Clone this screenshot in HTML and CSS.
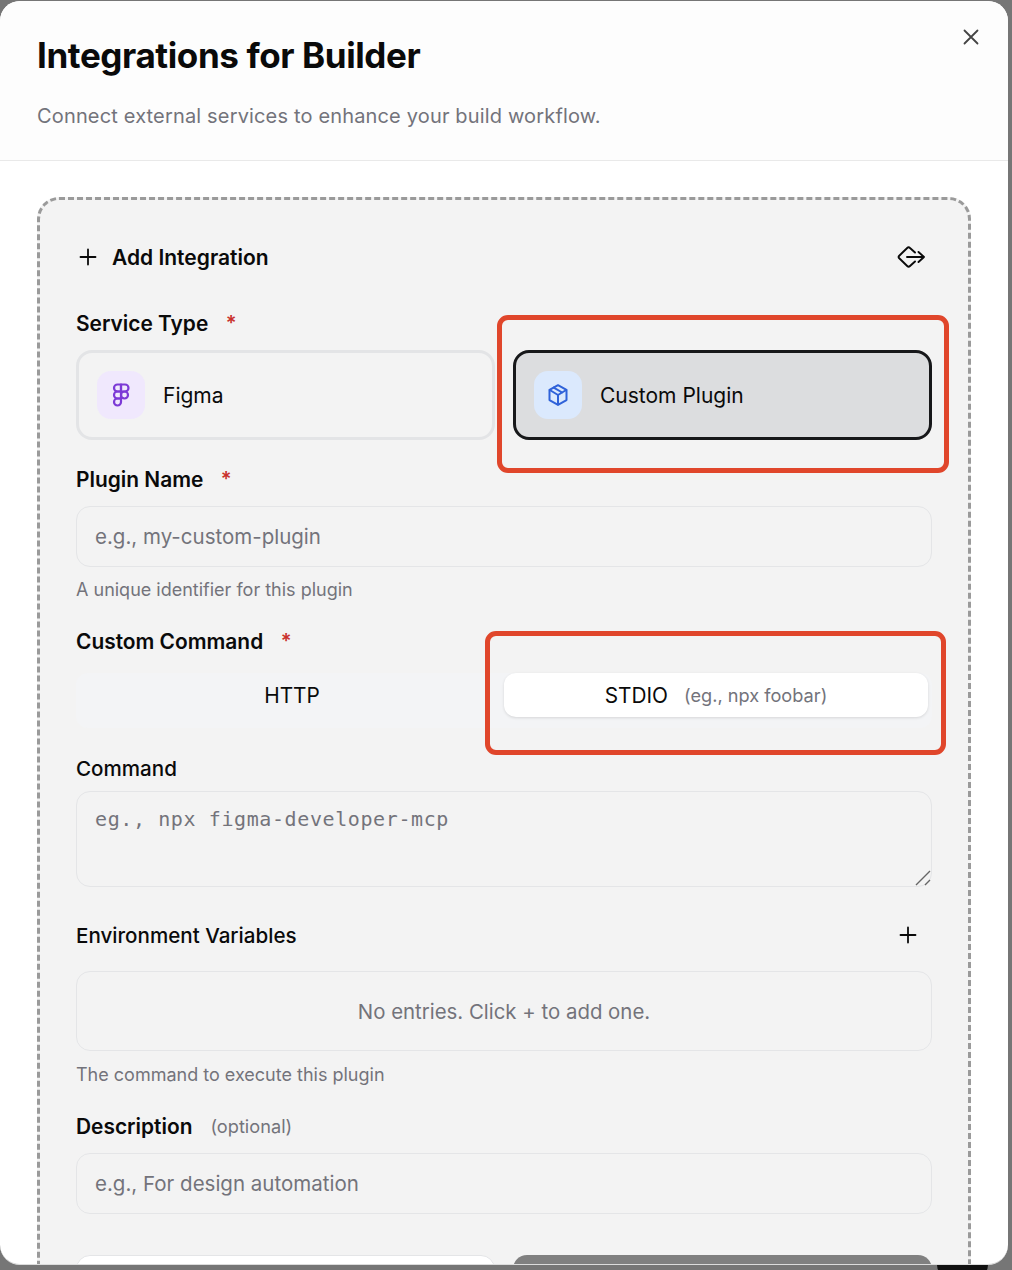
FILE: index.html
```html
<!DOCTYPE html>
<html lang="en">
  <head>
    <meta charset="UTF-8" />
    <meta name="viewport" content="width=device-width, initial-scale=1.0" />
    <title>Integrations for Builder</title>
    <link rel="stylesheet" href="styles.css">
  </head>
  <body>
    <div class="modal">
      <!-- HEADER -->
      <div class="modal-header">
        <h1>Integrations for Builder</h1>
        <p>Connect external services to enhance your build workflow.</p>
        <button class="close-btn" aria-label="Close">
          <svg width="18" height="18" viewBox="0 0 18 18" fill="none" stroke="#444" stroke-width="1.8" stroke-linecap="round"><path d="M2.5 2.5l13 13M15.5 2.5l-13 13"/></svg>
        </button>
      </div>

      <div class="modal-body">
        <div class="panel">
          <div class="panel-title">
            <div class="panel-title-left">
              <svg width="18" height="18" viewBox="0 0 18 18" fill="none" stroke="#0a0a0a" stroke-width="1.8" stroke-linecap="round"><path d="M9 1.5v15M1.5 9h15"/></svg>
              <span>Add Integration</span>
            </div>
            <svg width="28" height="22" viewBox="0 0 28 22" fill="none" stroke="#0a0a0a" stroke-width="1.9" stroke-linecap="round" stroke-linejoin="round"><path d="M18 6.500L13 2a2 2 0 0 0-2.800 0L2 10a1.400 1.400 0 0 0 0 2l8.200 8a2 2 0 0 0 2.800 0l5-4.500"/><path d="M10 11H27M21.500 6L27 11l-5.500 5"/></svg>
          </div>

          <div class="label-row"><label>Service Type</label><span class="required">*</span></div>
          <div class="service-grid">
            <div class="service-card">
              <div class="service-icon icon-figma">
                <svg width="24" height="24" viewBox="0 0 24 24" fill="none" stroke="#7c3ad6" stroke-width="2.200" stroke-linecap="round" stroke-linejoin="round"><path d="M12 1.500H8.500a3.500 3.500 0 0 0 0 7H12z"/><path d="M12 8.500H8.500a3.500 3.500 0 0 0 0 7H12z"/><path d="M12 15.500H8.500a3.500 3.500 0 1 0 3.500 3.500z"/><path d="M12 1.500h4a3.500 3.500 0 1 1 0 7h-4z"/><path d="M12 12a3.500 3.500 0 1 1 7 0a3.500 3.500 0 1 1-7 0z"/></svg>
              </div>
              <span>Figma</span>
            </div>
            <div class="service-card selected">
              <div class="service-icon icon-plugin">
                <svg width="24" height="24" viewBox="0 0 24 24" fill="none" stroke="#2f62d9" stroke-width="2" stroke-linecap="round" stroke-linejoin="round"><path d="M12 2.200l8.500 4.700v10.200L12 21.800l-8.500-4.700V6.900z"/><path d="M3.800 7L12 12l8.200-5M12 12v9.600M7.700 4.600l8.500 4.900"/></svg>
              </div>
              <span>Custom Plugin</span>
              <div class="highlight highlight-card"></div>
            </div>
          </div>

          <div class="label-row name-label"><label>Plugin Name</label><span class="required">*</span></div>
          <input class="text-input" type="text" placeholder="e.g., my-custom-plugin" />
          <div class="hint hint-name">A unique identifier for this plugin</div>

          <div class="label-row command-label"><label>Custom Command</label><span class="required">*</span></div>
          <div class="segments">
            <div class="segment">HTTP</div>
            <div class="segment active">
              <span>STDIO</span><span class="segment-note">(eg., npx foobar)</span>
              <div class="highlight highlight-segment"></div>
            </div>
          </div>

          <div class="label-row plain-label"><label class="normal">Command</label></div>
          <div class="command-wrap">
            <textarea class="command-input" placeholder="eg., npx figma-developer-mcp"></textarea>
            <svg class="resize-grip" width="16" height="16" viewBox="0 0 16 16" fill="none" stroke="#666" stroke-width="1.400"><path d="M1 15L15 1M10 15l5-5"/></svg>
          </div>

          <div class="env-row">
            <label class="normal">Environment Variables</label>
            <svg width="18" height="18" viewBox="0 0 18 18" fill="none" stroke="#0a0a0a" stroke-width="1.8" stroke-linecap="round"><path d="M9 1.500v15M1.500 9h15"/></svg>
          </div>
          <div class="env-box">No entries. Click + to add one.</div>
          <div class="hint">The command to execute this plugin</div>

          <div class="label-row desc-label"><label>Description</label><span class="optional">(optional)</span></div>
          <input class="text-input" type="text" placeholder="e.g., For design automation" />

          <div class="actions">
            <button class="btn-cancel"></button>
            <button class="btn-save"></button>
          </div>
        </div>
      </div>
    </div>
    <div class="dock-bump"></div>
  </body>
</html>
```

FILE: styles.css
```css
* {
  box-sizing: border-box;
  margin: 0;
  padding: 0;
}

html,
body {
  height: 100%;
  overflow: hidden;
  background-color: #767676;
  font-family: Inter, "Liberation Sans", sans-serif;
  color: #0a0a0a;
}

.modal {
  position: relative;
  width: 1008px;
  height: 1264px;
  margin-top: 1px;
  background-color: #fff;
  border-bottom: 1px solid #dcdcdc;
  border-radius: 20px;
  overflow: hidden;
}

.modal-header {
  position: relative;
  height: 160px;
  padding: 32px 37px 0;
  background-color: #fdfdfd;
  border-bottom: 1px solid #e9e9e9;
}

.modal-header h1 {
  font-size: 35px;
  line-height: 44px;
  font-weight: 700;
  letter-spacing: -0.4px;
}

.modal-header p {
  margin-top: 25px;
  font-size: 20px;
  line-height: 28px;
  letter-spacing: 0.16px;
  color: #73737b;
}

.close-btn {
  position: absolute;
  top: 27px;
  right: 28px;
  width: 18px;
  height: 18px;
  border: none;
  background: none;
}

.modal-body {
  padding: 36px 37px 0;
}

.panel {
  min-height: 1200px;
  padding: 39px 36px 0;
  background-color: #f3f3f3;
  border: 3px dashed #9a9a9a;
  border-radius: 22px;
}

.panel-title {
  display: flex;
  justify-content: space-between;
  align-items: center;
  height: 36px;
  padding: 0 7px 0 3px;
}

.panel-title-left {
  display: flex;
  align-items: center;
  gap: 15px;
  font-size: 21px;
  font-weight: 600;
}

.label-row {
  display: flex;
  align-items: center;
  height: 28px;
  margin-top: 34px;
}

.label-row label {
  font-size: 20.9px;
  font-weight: 600;
}

.label-row label.normal,
.env-row label.normal {
  font-size: 20.6px;
  font-weight: 500;
}

.required {
  margin-left: 17.5px;
  font-size: 20px;
  font-weight: 600;
  color: #c9302c;
}

.optional {
  margin-left: 18px;
  font-size: 18.2px;
  color: #73737b;
}

.service-grid {
  display: grid;
  grid-template-columns: 1fr 1fr;
  gap: 18px;
  margin-top: 13px;
}

.service-card {
  position: relative;
  display: flex;
  align-items: center;
  gap: 18px;
  height: 90px;
  padding: 0 18px;
  border: 3px solid #e3e4e6;
  border-radius: 16px;
  font-size: 21px;
}

.service-card.selected {
  background-color: #dcdddf;
  border-color: #17181a;
}

.service-icon {
  display: flex;
  justify-content: center;
  align-items: center;
  width: 48px;
  height: 48px;
  border-radius: 14px;
}

.icon-figma {
  background-color: #f0e8fd;
}

.icon-plugin {
  background-color: #dbe9fd;
}

.highlight {
  position: absolute;
  border: 5px solid #e0462b;
  border-radius: 11px;
  pointer-events: none;
}

.highlight-card {
  top: -38px;
  right: -20px;
  bottom: -36px;
  left: -19px;
}

.highlight-segment {
  top: -42px;
  right: -18px;
  bottom: -38px;
  left: -19px;
}

.name-label {
  margin-top: 25px;
}

.text-input {
  display: block;
  width: 100%;
  height: 61px;
  margin-top: 13px;
  padding: 0 18px;
  background: none;
  border: 1px solid #e4e5e7;
  border-radius: 14px;
  font-family: inherit;
  font-size: 20.5px;
  outline: none;
}

.text-input::placeholder,
.command-input::placeholder {
  color: #73737b;
  opacity: 1;
}

.hint {
  margin-top: 12px;
  font-size: 18px;
  line-height: 24px;
  color: #73737b;
}

.hint-name {
  margin-top: 11px;
}

.command-label {
  margin-top: 25px;
}

.segments {
  display: grid;
  grid-template-columns: 1fr 1fr;
  height: 55px;
  margin-top: 18px;
  padding: 0 4px 11px;
  background-color: #f3f4f6;
  border-radius: 12px;
}

.segment {
  position: relative;
  display: flex;
  justify-content: center;
  align-items: center;
  gap: 16px;
  font-size: 20.8px;
}

.segment.active {
  background-color: #fff;
  border-radius: 12px;
  box-shadow: 0 1px 3px rgba(0, 0, 0, 0.12);
}

.segment-note {
  font-size: 18.2px;
  color: #73737b;
}

.plain-label {
  margin-top: 26px;
}

.command-wrap {
  position: relative;
  margin-top: 9px;
}

.command-input {
  display: block;
  width: 100%;
  height: 96px;
  padding: 13px 18px;
  background: none;
  border: 1px solid #e4e5e7;
  border-radius: 14px;
  font-family: "DejaVu Sans Mono", monospace;
  font-size: 20px;
  letter-spacing: 0.6px;
  line-height: 28px;
  outline: none;
  resize: none;
}

.resize-grip {
  position: absolute;
  right: 1px;
  bottom: 1px;
}

.env-row {
  display: flex;
  justify-content: space-between;
  align-items: center;
  height: 28px;
  margin-top: 34px;
  padding-right: 15px;
}

.env-box {
  display: flex;
  justify-content: center;
  align-items: center;
  height: 80px;
  margin-top: 22px;
  border: 1px solid #e4e5e7;
  border-radius: 14px;
  font-size: 20.4px;
  color: #73737b;
}

.desc-label {
  margin-top: 25px;
}

.actions {
  display: grid;
  grid-template-columns: 1fr 1fr;
  gap: 18px;
  margin-top: 41px;
}

.actions button {
  height: 56px;
  border-radius: 14px;
}

.btn-cancel {
  background-color: #fff;
  border: 1px solid #e4e5e7;
}

.btn-save {
  background-color: #808080;
  border: none;
}

.dock-bump {
  position: absolute;
  top: 1265px;
  left: 937px;
  width: 51px;
  height: 12px;
  background-color: #111;
  border-radius: 0 0 20px 20px;
}
```
